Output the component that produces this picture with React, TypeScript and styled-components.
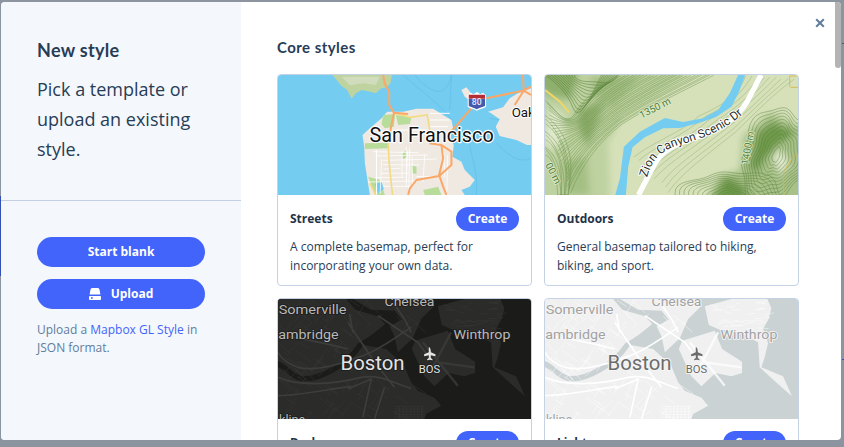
import React from "react";
import styled, { createGlobalStyle } from "styled-components";

const Global = createGlobalStyle`
  html, body { margin: 0; height: 100%; background: #8c959f; overflow: hidden; }
  #root { height: 100%; }
  * { box-sizing: border-box; }
`;

const Page = styled.div`
  position: relative;
  width: 844px;
  height: 447px;
  padding: 2px 3px 7px 1px;
  background: #8c959f;
  font-family: "Open Sans", sans-serif;
`;
const BackdropMark = styled.i<{ $x: number; $y: number; $w: number; $h: number; $c: string }>`
  position: absolute;
  left: ${(p) => p.$x}px;
  top: ${(p) => p.$y}px;
  width: ${(p) => p.$w}px;
  height: ${(p) => p.$h}px;
  background: ${(p) => p.$c};
`;
const Modal = styled.div`
  position: relative;
  z-index: 1;
  display: flex;
  height: 100%;
  overflow: hidden;
  background: #fff;
  border-radius: 4px;
`;
const Side = styled.aside`
  flex: none;
  width: 240px;
  height: 100%;
  background: #f4f7fc;
  color: #273d56;
`;
const SideTop = styled.div`
  height: 199px;
  padding: 36px 36px 0;
  border-bottom: 1px solid #c3d0e3;
`;
const SideBottom = styled.div`
  display: flex;
  flex-direction: column;
  gap: 12px;
  padding: 36px 36px 0;
`;
const Heading = styled.h1`
  margin: 0 0 12px;
  font: 700 18px/24px Lato, sans-serif;
  letter-spacing: 0.3px;
`;
const Lead = styled.p`
  margin: 0;
  font-size: 18px;
  line-height: 30px;
`;
const Pill = styled.button`
  display: flex;
  align-items: center;
  justify-content: center;
  gap: 10px;
  width: 168px;
  height: 30px;
  padding: 0;
  border: 0;
  border-radius: 15px;
  background: #4264fb;
  color: #fff;
  font: 700 12px/18px "Open Sans", sans-serif;
`;
const Help = styled.p`
  margin: 0;
  color: #607d9c;
  font-size: 12px;
  line-height: 18px;
`;
const HelpLink = styled.span`
  color: #4264fb;
`;
const Main = styled.main`
  flex: 1;
  padding: 33px 0 0 36px;
`;
const SectionTitle = styled.h2`
  margin: 0 0 15px;
  color: #273d56;
  font: 700 15px/24px Lato, sans-serif;
  letter-spacing: 0.45px;
`;
const Cards = styled.div`
  display: grid;
  grid-template-columns: 255px 255px;
  gap: 12px;
`;
const Card = styled.article`
  height: 212px;
  border: 1px solid #c5d2e5;
  border-radius: 4px;
  overflow: hidden;
`;
const MapFrame = styled.svg`
  display: block;
  width: 253px;
  height: 120px;
`;
const CardBody = styled.div`
  padding: 12px 12px 0;
`;
const CardHead = styled.div`
  display: flex;
  align-items: center;
  justify-content: space-between;
  height: 24px;
  margin-bottom: 6px;
`;
const CardTitle = styled.h3`
  margin: 0;
  color: #1f3349;
  font: 700 12px/18px "Open Sans", sans-serif;
`;
const CreateButton = styled.button`
  width: 63px;
  height: 24px;
  padding: 0;
  border: 0;
  border-radius: 12px;
  background: #4264fb;
  color: #fff;
  font: 700 12px/18px "Open Sans", sans-serif;
`;
const CardText = styled.p`
  margin: 0;
  color: #273d56;
  font-size: 12px;
  line-height: 19px;
`;
const Close = styled.button`
  position: absolute;
  top: 15px;
  right: 15px;
  display: flex;
  width: 12px;
  height: 12px;
  padding: 0;
  border: 0;
  background: none;
  color: #607d9c;
`;
const Thumb = styled.div`
  position: absolute;
  top: 0;
  right: 0;
  width: 6px;
  height: 66px;
  border-radius: 0 0 3px 3px;
  background: #b4b4b4;
`;

function mulberry(seed: number) {
  let s = seed;
  return () => {
    s = (s + 0x6d2b79f5) | 0;
    let t = Math.imul(s ^ (s >>> 15), 1 | s);
    t = (t + Math.imul(t ^ (t >>> 7), 61 | t)) ^ t;
    return ((t ^ (t >>> 14)) >>> 0) / 4294967296;
  };
}

const labelFont = "Roboto, sans-serif";
type Pt = [number, number];

/** Contour family: lines interpolated between an inner and an outer 7-point curve. */
function family(inner: Pt[], outer: Pt[], n: number, seed: number) {
  const r = mulberry(seed);
  const out: string[] = [];
  for (let i = 0; i < n; i++) {
    const t = (i + r() * 0.35) / n;
    const p = inner.map((a, j) => {
      const w = Math.sin(t * 19 + j * 1.7) * 4;
      return `${(a[0] + (outer[j][0] - a[0]) * t + w).toFixed(1)} ${(a[1] + (outer[j][1] - a[1]) * t - w * 0.6).toFixed(1)}`;
    });
    out.push(`M${p[0]}C${p[1]} ${p[2]} ${p[3]}C${p[4]} ${p[5]} ${p[6]}`);
  }
  return out.join("");
}

/** Smooth irregular closed contour around a summit. */
function blob(cx: number, cy: number, rx: number, ry: number, rot: number, level: number) {
  const pts: string[] = [];
  const c = Math.cos(rot);
  const s = Math.sin(rot);
  for (let a = 0; a < 64; a++) {
    const th = (a / 64) * Math.PI * 2;
    const k = 1 + 0.09 * Math.sin(th * 3 + level * 0.25) + 0.05 * Math.sin(th * 7 + 1.3);
    const x = Math.cos(th) * rx * k;
    const y = Math.sin(th) * ry * k;
    pts.push(`${(cx + x * c - y * s).toFixed(1)} ${(cy + x * s + y * c).toFixed(1)}`);
  }
  return `M${pts.join("L")}Z`;
}

function StreetsMap() {
  const r = mulberry(4);
  const grid: string[] = [];
  for (let i = 0; i < 9; i++) {
    const x = 300 + r() * 240;
    grid.push(`M${x} ${350 + r() * 40}L${x + 6 - r() * 12} ${440 + r() * 55}`);
    const y = 365 + i * 13;
    grid.push(`M${295 + r() * 60} ${y}L${380 + r() * 130} ${y + 4 - r() * 8}`);
  }
  return (
    <MapFrame viewBox="24 135 760 360" preserveAspectRatio="none">
      <rect x="24" y="135" width="760" height="360" fill="#74cdf1" />
      <g fill="none" stroke="#62bde6" strokeWidth="2">
        <path d="M400 135C450 180 520 230 545 270M435 135C480 190 530 210 545 135M545 135L540 240" />
        <path d="M600 345C610 400 625 430 620 495M680 340C720 380 750 400 784 385M660 265C700 270 740 280 784 272" />
      </g>
      <path fill="#bed3a0" d="M188 135H366L362 160 350 172 332 176 318 190 295 184 275 180 258 190 245 206 232 180 215 168 200 150Z" />
      <path fill="#d0dcbb" d="M215 140H330L318 165 280 160 240 166Z" />
      <path fill="#efe9e2" d="M278 315 300 295 335 265 352 245 400 245 440 236 490 236 520 255 545 270 550 295 540 320 552 345 548 380 575 395 585 420 615 450 600 470 575 480 585 495H300L292 445 285 400 283 350Z" />
      <path fill="#efe9e2" d="M575 180 590 172 608 195 598 210 585 200ZM655 245 700 232 720 205 745 190 784 175V345H772L740 330 690 318 678 290 690 268 664 250Z" />
      <path fill="#b8dc9a" d="M340 255 376 252 372 290 345 295 335 282ZM378 255 425 262 420 282 385 285ZM285 340 355 338 356 355 285 357ZM460 480 505 470 515 495H465ZM395 370 410 362 412 382 400 388ZM425 405 440 410 440 432 428 430ZM295 440 330 450 345 495H315Z" />
      <path fill="#74cdf1" d="M315 462 335 455 342 478 325 490Z" />
      <path fill="none" stroke="#fff" strokeWidth="2.5" opacity=".9" d={grid.join("")} />
      <path fill="none" stroke="#fff" strokeWidth="3" d="M480 250H540M480 270H540M480 290H535M380 300H470M320 360V495M390 300V340M440 440H510" />
      <path fill="none" stroke="#f3db83" strokeWidth="5" d="M378 250 420 262 472 255 482 310M355 340 358 400 368 495M300 460 318 495" />
      <path fill="none" stroke="#fba767" strokeWidth="6" strokeLinejoin="round" d="M340 135 344 160 358 185 358 225 372 248 415 252M372 250 355 335M535 315 605 235M650 205 760 182 784 170M760 135 762 182 735 225M762 182 784 195M478 340 515 345 520 385 508 435 520 470 530 495M515 345 545 365 545 405 508 438 440 450 420 475 415 495" />
      <path d="M594 196 604 188 611 193 622 186 632 193 640 188 649 196V230C640 236 630 236 621 242 612 236 602 236 594 230Z" fill="#fff" />
      <path d="M597 194H646V206H597Z" fill="#b62c34" />
      <path d="M597 207H646V228C638 232 629 233 621 238 613 233 604 232 597 228Z" fill="#4758ad" />
      <text x="621" y="226" fontSize="26" fontFamily={labelFont} fontWeight="500" textAnchor="middle" fill="#e7ebff">80</text>
      <text x="299" y="336" fontSize="62" textLength="373" lengthAdjust="spacingAndGlyphs" fontFamily={labelFont} fill="#111" stroke="#fff" strokeWidth="7" strokeLinejoin="round" paintOrder="stroke">San Francisco</text>
      <text x="726" y="262" fontSize="40" fontFamily={labelFont} fill="#111" stroke="#fff" strokeWidth="6" strokeLinejoin="round" paintOrder="stroke">Oakland</text>
    </MapFrame>
  );
}

function OutdoorsMap() {
  const west = family(
    [[15, 300], [45, 330], [75, 375], [102, 345], [125, 300], [165, 265], [235, 225]],
    [[95, 585], [125, 500], [175, 430], [255, 370], [335, 320], [425, 280], [530, 225]],
    27, 3,
  );
  const sw = family(
    [[15, 470], [40, 480], [50, 530], [55, 585], [55, 585], [55, 585], [55, 585]],
    [[15, 330], [85, 390], [110, 470], [88, 585], [88, 585], [88, 585], [88, 585]],
    9, 5,
  );
  const nwLines: string[] = [];
  for (let i = 0; i < 11; i++) {
    nwLines.push(`M${15 + i * 9} 225C${50 + i * 5} ${250 - i * 2} ${80 + i * 3} ${275 - i * 3} ${100 + i * 5} ${325 - i * 8}S${165 + i * 5} 260 ${185 + i * 5} 225`);
  }
  const plain = family(
    [[280, 470], [345, 420], [420, 400], [480, 345], [540, 320], [590, 290], [620, 225]],
    [[400, 585], [430, 530], [510, 470], [600, 400], [660, 340], [700, 290], [775, 240]],
    9, 12,
  );
  const hills: string[] = [];
  for (let i = 0; i < 12; i++) {
    hills.push(blob(710, 465, 10 + i * 8.5, 24 + i * 11, 0.35, i));
    hills.push(blob(570, 610, 24 + i * 12, 22 + i * 7, 0, i + 4));
  }
  return (
    <MapFrame viewBox="15 225 760 360" preserveAspectRatio="none">
      <defs>
        <filter id="soft" x="-20%" y="-20%" width="140%" height="140%"><feGaussianBlur stdDeviation="11" /></filter>
        <path id="zion" d="M322 533C335 480 365 450 420 434 490 417 570 385 620 330" />
      </defs>
      <rect x="15" y="225" width="760" height="360" fill="#d6e1ba" />
      <g filter="url(#soft)">
        <path fill="#bed1a0" d="M-20 200H480L330 300 250 345 205 430 210 620H-20Z" />
        <path fill="#8fb06d" d="M-20 200H120L90 300 30 290 -20 250ZM110 330 200 300 175 360 145 440 120 400Z" />
        <path fill="#a4bf84" d="M150 230 300 230 220 320 170 300ZM60 490 140 470 150 585H80Z" />
        <path fill="#dfe8cb" d="M30 320 75 350 70 420 35 450 10 420Z" />
        <path fill="#a8c188" d="M610 410 690 340 800 390V620H490L540 530 600 510Z" />
        <path fill="#6f9a4c" d="M655 395 700 365 770 400 720 430 680 470 650 520 630 500ZM510 600 560 530 600 550 640 600Z" />
        <path fill="#e2ead0" d="M700 470 725 445 750 490 720 530Z" />
      </g>
      <g fill="none" strokeLinejoin="round">
        <path d={west} stroke="#6c9149" strokeWidth="1.7" opacity=".8" />
        <path d={nwLines.join("")} stroke="#557f36" strokeWidth="1.8" opacity=".85" />
        <path d={sw} stroke="#6c9149" strokeWidth="1.7" opacity=".8" />
        <path d={plain} stroke="#9ab67d" strokeWidth="1.6" />
        <path d={hills.join("")} stroke="#557f36" strokeWidth="1.7" opacity=".75" />
      </g>
      <path fill="#74cdf1" d="M595 225H616L598 275 575 320 530 350 480 368 420 384 370 385 315 412 278 442 265 500 258 585H226L240 535 252 440 300 395 375 354 430 366 490 355 535 330 570 280Z" />
      <path fill="none" stroke="#f1d565" strokeWidth="6" d="M15 270 60 305 88 338" />
      <path fill="none" stroke="#d7b642" strokeWidth="2.5" d="M750 260V228H775M775 262H752M732 585V515L765 465H775" />
      <path fill="none" stroke="#fff" strokeWidth="16" d="M664 225 622 305C590 360 540 385 480 408 410 430 365 450 340 500L296 585" />
      <text fontSize="36" fontFamily={labelFont} fill="#2b2f2b" stroke="#fff" strokeWidth="6" strokeLinejoin="round" paintOrder="stroke">
        <textPath href="#zion">Zion Canyon Scenic Dr</textPath>
      </text>
      <g fontSize="30" fontFamily={labelFont} fill="#4e8140" stroke="#dfe9c8" strokeWidth="5" strokeLinejoin="round" paintOrder="stroke">
        <text transform="translate(305 356) rotate(-27)">1350 m</text>
        <text transform="translate(625 496) rotate(-80)">1400 m</text>
        <text transform="translate(15 495) rotate(62)">00 m</text>
      </g>
    </MapFrame>
  );
}

function BostonMap({ water, land, road, minor, label, halo, sub }: { water: string; land: string; road: string; minor: string; label: string; halo: string; sub: string }) {
  const r = mulberry(11);
  const lines: string[] = [];
  for (let i = 0; i < 170; i++) {
    const x = r() * 420;
    const y = r() * 360;
    const a = (r() > 0.5 ? 0.5 : 2.1) + r() * 0.3;
    const l = 18 + r() * 42;
    if (x > 260 && y < 230 && y > 80) continue;
    lines.push(`M${x.toFixed(1)} ${y.toFixed(1)}l${(Math.cos(a) * l).toFixed(1)} ${(Math.sin(a) * l).toFixed(1)}`);
  }
  for (let i = 0; i < 34; i++) {
    const x = 480 + r() * 180;
    const y = 8 + r() * 85;
    lines.push(`M${x.toFixed(1)} ${y.toFixed(1)}l${(10 + r() * 25).toFixed(1)} ${(8 - r() * 16).toFixed(1)}`);
  }
  for (let i = 0; i < 7; i++) {
    const y = 322 + i * 8;
    lines.push(`M350 ${y}H440M${365 + i * 11} 320V360`);
  }
  return (
    <MapFrame viewBox="0 0 760 360" preserveAspectRatio="none">
      <rect width="760" height="360" fill={water} />
      <g fill={land}>
        <path d="M0 0H205L232 32 300 52 322 75 285 105 240 135 325 150 378 198 400 250 420 275 470 296 490 320 445 345 440 360H0Z" />
        <path d="M225 0H460L470 20 430 60 405 118 360 160 350 112 335 82 372 62 350 35 280 32Z" />
        <path d="M412 125 510 95 532 150 592 188 592 222 560 232 512 222 470 262 440 232 420 190 402 150Z" />
        <path d="M480 22 560 0H668L680 28 672 60 655 90 670 132 660 175 650 205 715 232 742 292 700 255 645 205 640 130 580 100 525 92 492 78Z" />
      </g>
      <path fill="none" stroke={water} strokeWidth="16" strokeLinecap="round" d="M0 195C25 205 40 232 70 238S130 232 165 212 225 170 245 140" />
      <path fill="none" stroke={minor} strokeWidth="1.4" d={lines.join("")} />
      <g fill="none" stroke={road} strokeWidth="5" strokeLinejoin="round">
        <path d="M0 235C60 262 160 258 250 235 310 225 340 250 400 268M210 70C235 110 265 150 290 190L350 265M400 85C360 110 310 150 255 170 200 190 120 220 60 205 30 195 10 180 0 160M215 45 225 100M210 270 280 240 255 355M320 265 290 360M0 290C70 290 150 270 220 262" />
        <path d="M300 50 360 90 420 130 450 170M345 10 380 60 400 100M0 110C60 115 130 130 210 150" />
      </g>
      <g fill="none" stroke={road} strokeWidth="7" opacity=".75">
        <path d="M480 190 590 205M520 100 462 210M435 130 540 260" />
      </g>
      <g fontFamily={labelFont} fill={sub} stroke={halo} strokeWidth="5" strokeLinejoin="round" paintOrder="stroke">
        <text x="2" y="46" fontSize="38" textLength="204" lengthAdjust="spacingAndGlyphs">Somerville</text>
        <text x="320" y="20" fontSize="38" textLength="150" lengthAdjust="spacingAndGlyphs">Chelsea</text>
        <text x="1" y="121" fontSize="38" textLength="181" lengthAdjust="spacingAndGlyphs">ambridge</text>
        <text x="527" y="121" fontSize="38" textLength="171" lengthAdjust="spacingAndGlyphs">Winthrop</text>
        <text x="3" y="375" fontSize="38">kline</text>
      </g>
      <text x="188" y="213" fontSize="61" textLength="192" lengthAdjust="spacingAndGlyphs" fontFamily={labelFont} fill={label} stroke={halo} strokeWidth="6" strokeLinejoin="round" paintOrder="stroke">Boston</text>
      <text x="423" y="221" fontSize="31" textLength="64" lengthAdjust="spacingAndGlyphs" fontFamily={labelFont} fill={label} stroke={halo} strokeWidth="5" strokeLinejoin="round" paintOrder="stroke">BOS</text>
      <path fill={label} d="M451 144C453 144 456 150 456 155V159L470 165V171L456 168V176L461 180V183L453 181 445 183V180L450 176V168L436 171V165L450 159V155C450 150 449 144 451 144Z" transform="translate(3 1)" />
    </MapFrame>
  );
}

const dark = { water: "#1b1c1a", land: "#2b2b2a", road: "#3d3d3c", minor: "#3a3a39", label: "#e4e4e4", halo: "#1d1d1c", sub: "#b9b9b9" };
const light = { water: "#cad2d4", land: "#f0f0f0", road: "#ffffff", minor: "#ffffff", label: "#6c6c6c", halo: "#f6f6f6", sub: "#a2a2a2" };

function UploadIcon() {
  return (
    <svg width="12" height="14" viewBox="0 0 12 14" aria-hidden="true">
      <path fill="currentColor" d="M3.4 1H8.6C9.6 1 10.2 1.7 10.5 2.6L11.4 7.5H.6L1.5 2.6C1.8 1.7 2.4 1 3.4 1Z" />
      <path fill="currentColor" fillRule="evenodd" d="M1 9H11C11.5 9 12 9.4 12 10V12C12 12.6 11.5 13 11 13H1C.5 13 0 12.6 0 12V10C0 9.4.5 9 1 9ZM2 10.3V11.7H3.8V10.3Z" />
    </svg>
  );
}

const items = [
  { title: "Streets", text: "A complete basemap, perfect for incorporating your own data.", map: <StreetsMap /> },
  { title: "Outdoors", text: "General basemap tailored to hiking, biking, and sport.", map: <OutdoorsMap /> },
  { title: "Dark", text: "", map: <BostonMap {...dark} /> },
  { title: "Light", text: "", map: <BostonMap {...light} /> },
];

export default function App() {
  return (
    <Page>
      <Global />
      <BackdropMark $x={0} $y={196} $w={1} $h={80} $c="#3351b5" />
      <BackdropMark $x={842} $y={359} $w={2} $h={1} $c="#3351b5" />
      <BackdropMark $x={842} $y={43} $w={2} $h={1} $c="#4c5560" />
      <Modal>
        <Side>
          <SideTop>
            <Heading>New style</Heading>
            <Lead>Pick a template or upload an existing style.</Lead>
          </SideTop>
          <SideBottom>
            <Pill>Start blank</Pill>
            <Pill>
              <UploadIcon />
              Upload
            </Pill>
            <Help>
              Upload a <HelpLink>Mapbox GL Style</HelpLink> in JSON format.
            </Help>
          </SideBottom>
        </Side>
        <Main>
          <SectionTitle>Core styles</SectionTitle>
          <Cards>
            {items.map((item) => (
              <Card key={item.title}>
                {item.map}
                <CardBody>
                  <CardHead>
                    <CardTitle>{item.title}</CardTitle>
                    <CreateButton>Create</CreateButton>
                  </CardHead>
                  <CardText>{item.text}</CardText>
                </CardBody>
              </Card>
            ))}
          </Cards>
        </Main>
        <Close aria-label="Close">
          <svg width="12" height="12" viewBox="0 0 12 12" aria-hidden="true">
            <path d="M2.2 2.2 9.8 9.8M9.8 2.2 2.2 9.8" stroke="currentColor" strokeWidth="2" />
          </svg>
        </Close>
        <Thumb />
      </Modal>
    </Page>
  );
}
